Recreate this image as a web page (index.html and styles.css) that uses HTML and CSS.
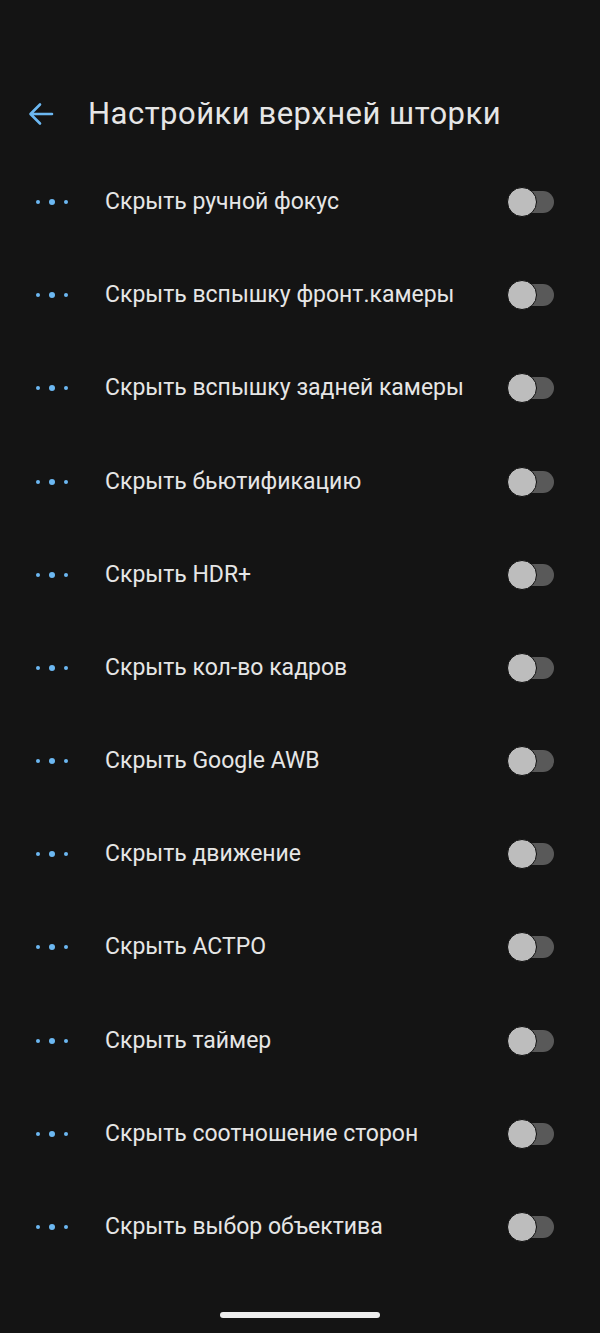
FILE: index.html
```html
<!DOCTYPE html>
<html lang="ru">
<head>
    <meta charset="UTF-8">
    <meta name="viewport" content="width=device-width, initial-scale=1.0">
    <title>Настройки верхней шторки</title>
    <link rel="stylesheet" href="styles.css">
</head>
<body>
    <header class="top-bar">
        <svg class="back" width="26" height="24" viewBox="0 0 26 24">
            <path d="M24 12H3M12 2.5L2.5 12L12 21.5" fill="none" stroke="#6cb8f2" stroke-width="2.6" stroke-linecap="round" stroke-linejoin="round"/>
        </svg>
        <h1 class="title">Настройки верхней шторки</h1>
    </header>
    <ul class="options">
        <li class="option"><span class="dots"><i></i><i class="big"></i><i></i></span><span class="label">Скрыть ручной фокус</span><span class="switch"><span class="thumb"></span></span></li>
        <li class="option"><span class="dots"><i></i><i class="big"></i><i></i></span><span class="label">Скрыть вспышку фронт.камеры</span><span class="switch"><span class="thumb"></span></span></li>
        <li class="option"><span class="dots"><i></i><i class="big"></i><i></i></span><span class="label">Скрыть вспышку задней камеры</span><span class="switch"><span class="thumb"></span></span></li>
        <li class="option"><span class="dots"><i></i><i class="big"></i><i></i></span><span class="label">Скрыть бьютификацию</span><span class="switch"><span class="thumb"></span></span></li>
        <li class="option"><span class="dots"><i></i><i class="big"></i><i></i></span><span class="label">Скрыть HDR+</span><span class="switch"><span class="thumb"></span></span></li>
        <li class="option"><span class="dots"><i></i><i class="big"></i><i></i></span><span class="label">Скрыть кол-во кадров</span><span class="switch"><span class="thumb"></span></span></li>
        <li class="option"><span class="dots"><i></i><i class="big"></i><i></i></span><span class="label">Скрыть Google AWB</span><span class="switch"><span class="thumb"></span></span></li>
        <li class="option"><span class="dots"><i></i><i class="big"></i><i></i></span><span class="label">Скрыть движение</span><span class="switch"><span class="thumb"></span></span></li>
        <li class="option"><span class="dots"><i></i><i class="big"></i><i></i></span><span class="label">Скрыть АСТРО</span><span class="switch"><span class="thumb"></span></span></li>
        <li class="option"><span class="dots"><i></i><i class="big"></i><i></i></span><span class="label">Скрыть таймер</span><span class="switch"><span class="thumb"></span></span></li>
        <li class="option"><span class="dots"><i></i><i class="big"></i><i></i></span><span class="label">Скрыть соотношение сторон</span><span class="switch"><span class="thumb"></span></span></li>
        <li class="option"><span class="dots"><i></i><i class="big"></i><i></i></span><span class="label">Скрыть выбор объектива</span><span class="switch"><span class="thumb"></span></span></li>
    </ul>
    <div class="home-bar"></div>
</body>
</html>
```

FILE: styles.css
```css
html, body {
    background: #141414;
}
body {
    margin: 0;
    font-family: Roboto, "Noto Sans", sans-serif;
    color: #e6e6e6;
}
.top-bar {
    display: flex;
    align-items: center;
    height: 48px;
    padding: 90px 0 0 28px;
}
.back {
    display: block;
    flex: none;
}
.title {
    margin: 0 0 0 34px;
    font-size: 31px;
    font-weight: 400;
    letter-spacing: 0.5px;
    line-height: 48px;
}
.options {
    list-style: none;
    margin: 17.4px 0 0;
    padding: 0;
}
.option {
    display: flex;
    align-items: center;
    height: 93.2px;
    padding: 0 46px 0 36px;
}
.dots {
    display: flex;
    align-items: center;
    gap: 9px;
    width: 69px;
    flex: none;
}
.dots i {
    display: block;
    width: 4px;
    height: 4px;
    border-radius: 50%;
    background: #6cb8f2;
}
.dots i.big {
    width: 6px;
    height: 6px;
}
.label {
    flex: 1;
    font-size: 23px;
    letter-spacing: 0;
    line-height: 28px;
}
.switch {
    position: relative;
    width: 46px;
    height: 22px;
    border-radius: 11px;
    background: #595959;
    flex: none;
}
.thumb {
    position: absolute;
    left: -1px;
    top: -4px;
    width: 28px;
    height: 28px;
    border-radius: 50%;
    background: #bdbdbd;
    border: 1px solid #0e0e0e;
}
.home-bar {
    width: 160px;
    height: 6px;
    margin: 38px auto 0;
    border-radius: 3px;
    background: #ededed;
}
```
